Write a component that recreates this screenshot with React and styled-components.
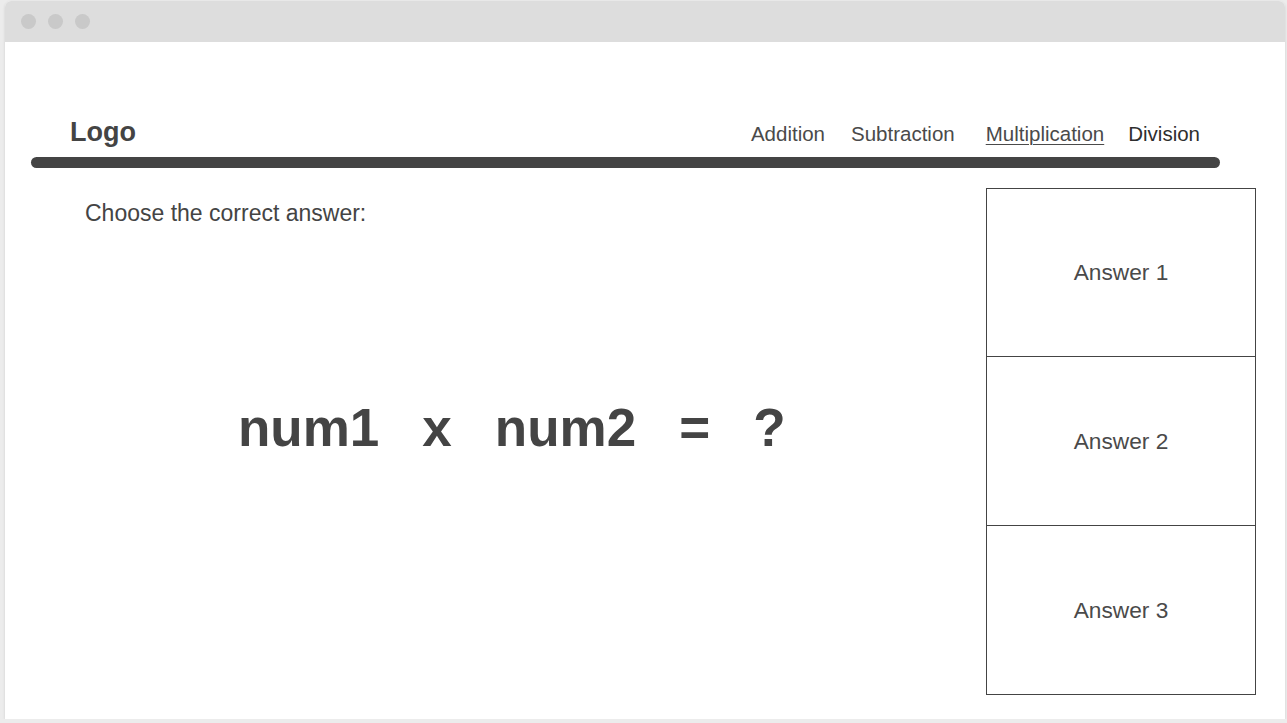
import styled, { createGlobalStyle } from 'styled-components';

const GlobalStyle = createGlobalStyle`
  html, body {
    margin: 0;
    padding: 0;
    background: #ececec;
    font-family: "Liberation Sans", Arial, sans-serif;
    color: #444;
  }
`;

const Frame = styled.div`
  width: 1280px;
  height: 718px;
  margin: 1px 0 0 5px;
  background: #fff;
  border-radius: 6px 6px 0 0;
  box-shadow: 0 1px 3px rgba(0, 0, 0, 0.12);
  display: flex;
  flex-direction: column;
  overflow: hidden;
`;

const TitleBar = styled.div`
  height: 41px;
  background: #dddddd;
  display: flex;
  align-items: center;
  gap: 12px;
  padding-left: 16px;
  flex-shrink: 0;
`;

const Dot = styled.span`
  width: 15px;
  height: 15px;
  border-radius: 50%;
  background: #c9c9c9;
`;

const Header = styled.div`
  display: flex;
  align-items: baseline;
  justify-content: space-between;
  margin-top: 75px;
  padding: 0 85px 0 65px;
  height: 33px;
`;

const Logo = styled.div`
  font-size: 27px;
  font-weight: bold;
  color: #444;
`;

const Nav = styled.nav`
  display: flex;
  align-items: baseline;
`;

const NavItem = styled.a`
  font-size: 20.5px;
  color: ${p => (p.$dark ? '#2e2e2e' : '#4a4a4a')};
  text-decoration: ${p => (p.$active ? 'underline' : 'none')};
  text-underline-offset: 3px;
  text-decoration-thickness: 1px;
  margin-left: ${p => p.$gap}px;
`;

const Bar = styled.div`
  height: 11px;
  margin: 7px 65px 0 26px;
  background: #444;
  border-radius: 6px;
`;

const Main = styled.div`
  display: flex;
  margin-top: 20px;
  padding-right: 29px;
`;

const QuestionArea = styled.div`
  flex: 1;
  padding: 12px 0 0 80px;
`;

const Prompt = styled.div`
  font-size: 23px;
  color: #444;
`;

const Equation = styled.div`
  display: flex;
  align-items: center;
  gap: 43px;
  margin-top: 171px;
  padding-left: 153px;
  font-size: 53px;
  font-weight: bold;
  color: #444;
  line-height: 60px;
`;

const Answers = styled.div`
  width: 270px;
  display: flex;
  flex-direction: column;
`;

const AnswerBox = styled.button`
  height: 169px;
  box-sizing: border-box;
  border: 1px solid #444;
  border-top-width: ${p => (p.$first ? 1 : 0)}px;
  background: #fff;
  font-family: "Liberation Sans", Arial, sans-serif;
  font-size: 22.7px;
  color: #4a4a4a;
  display: flex;
  align-items: center;
  justify-content: center;
  padding: 0;
  cursor: pointer;
`;

const navItems = [
  { name: 'Addition', gap: 0 },
  { name: 'Subtraction', gap: 26 },
  { name: 'Multiplication', gap: 31, active: true },
  { name: 'Division', gap: 24, dark: true },
];

const App = () => {
  return (
    <>
      <GlobalStyle />
      <Frame>
        <TitleBar>
          <Dot />
          <Dot />
          <Dot />
        </TitleBar>
        <Header>
          <Logo>Logo</Logo>
          <Nav>
            {navItems.map(item => (
              <NavItem
                key={item.name}
                $gap={item.gap}
                $active={item.active}
                $dark={item.dark}
              >
                {item.name}
              </NavItem>
            ))}
          </Nav>
        </Header>
        <Bar />
        <Main>
          <QuestionArea>
            <Prompt>Choose the correct answer:</Prompt>
            <Equation>
              <span>num1</span>
              <span>x</span>
              <span>num2</span>
              <span>=</span>
              <span>?</span>
            </Equation>
          </QuestionArea>
          <Answers>
            {['Answer 1', 'Answer 2', 'Answer 3'].map((a, i) => (
              <AnswerBox key={a} $first={i === 0}>
                {a}
              </AnswerBox>
            ))}
          </Answers>
        </Main>
      </Frame>
    </>
  );
};

export default App;
